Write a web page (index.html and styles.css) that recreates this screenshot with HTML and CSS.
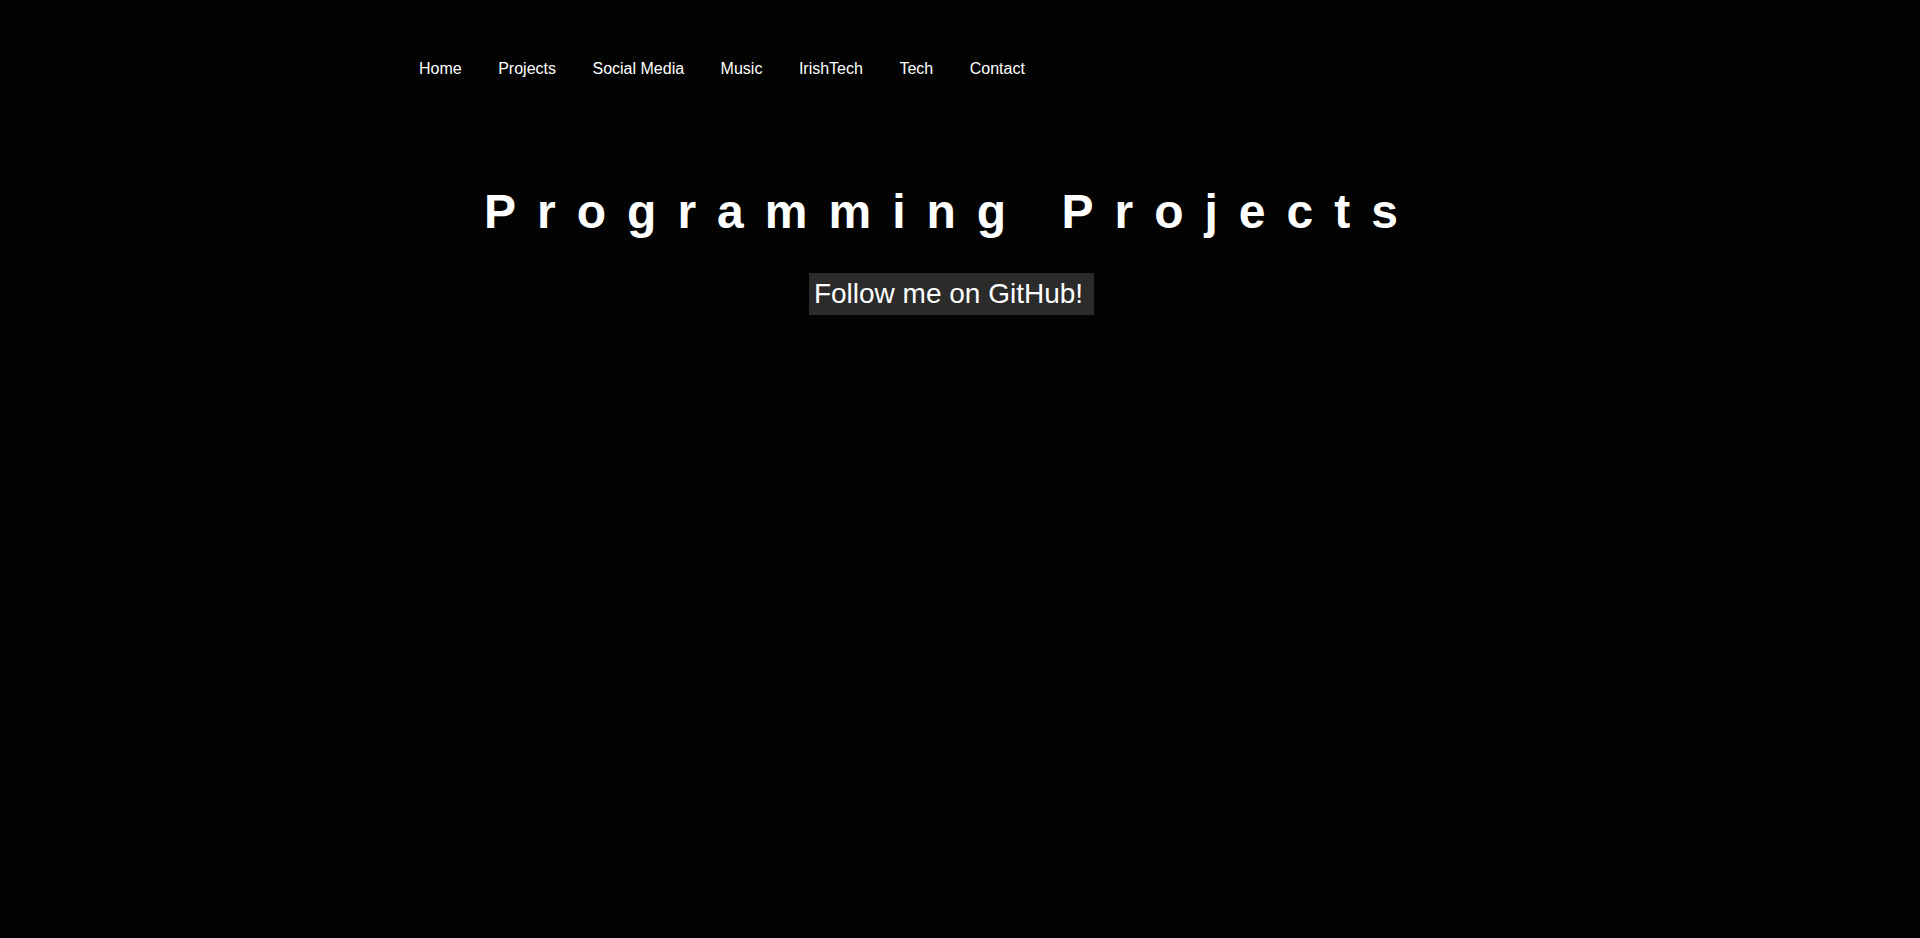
FILE: index.html
```html
<!DOCTYPE html>
<html lang="en">
<head>
<meta charset="utf-8">
<title>Programming Projects</title>
<link rel="stylesheet" href="styles.css">
</head>
<body>
<nav class="nav">
  <a class="nav-link" href="#">Home</a>
  <a class="nav-link" href="#">Projects</a>
  <a class="nav-link" href="#">Social Media</a>
  <a class="nav-link" href="#">Music</a>
  <a class="nav-link" href="#">IrishTech</a>
  <a class="nav-link" href="#">Tech</a>
  <a class="nav-link" href="#">Contact</a>
</nav>
<main class="main">
  <h1 class="title">Programming Projects</h1>
  <a class="github" href="#">Follow me on GitHub!</a>
</main>
</body>
</html>
```

FILE: styles.css
```css
html, body {
  margin: 0;
  padding: 0;
  background: #030303;
  height: 100%;
}

body {
  font-family: "Liberation Sans", Arial, sans-serif;
  color: #fff;
  padding-right: 17px;
}

.nav {
  display: flex;
  gap: 36.5px;
  padding: 60px 0 0 419px;
}

.nav-link {
  color: #fff;
  text-decoration: none;
  font-size: 16px;
  line-height: normal;
}

.main {
  display: flex;
  flex-direction: column;
  align-items: center;
}

.title {
  margin: 106px 0 0 0;
  font-size: 48px;
  font-weight: bold;
  letter-spacing: 21px;
  line-height: normal;
}

.github {
  margin-top: 34px;
  background: #2b2b2b;
  color: #fff;
  text-decoration: none;
  font-size: 28px;
  line-height: normal;
  padding: 5px 11px 5px 5px;
}
```
